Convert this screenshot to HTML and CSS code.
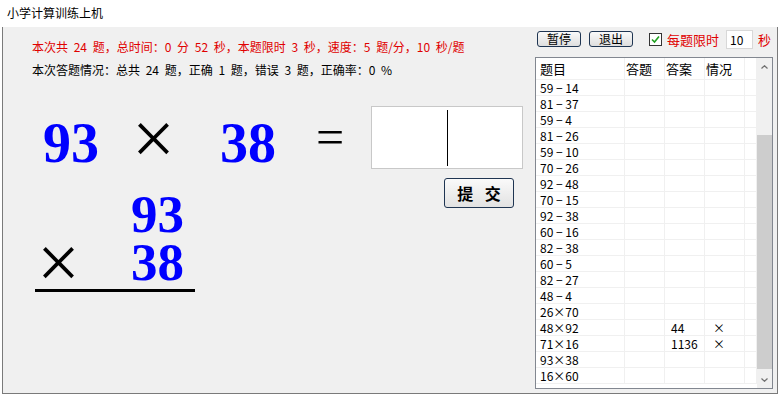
FILE: index.html
```html
<!doctype html>
<html lang="zh-CN">

<head>
	<meta charset="utf-8">
	<title>小学计算训练上机</title>
	<link rel="stylesheet" href="styles.css">
</head>

<body>
	<div class="window">
		<div class="titlebar">小学计算训练上机</div>
		<div class="client">
			<div class="main">
				<p class="status red">本次共 24 题，总时间：0 分 52 秒，本题限时 3 秒，速度：5 题/分，10 秒/题</p>
				<p class="status">本次答题情况：总共 24 题，正确 1 题，错误 3 题，正确率：0 %</p>

				<div class="equation">
					<span class="num">93</span>
					<span class="op">×</span>
					<span class="num">38</span>
					<span class="eq">=</span>
					<div class="answer"><span class="caret"></span></div>
				</div>

				<div class="lower">
					<div class="vertical">
						<div class="vrow"><span class="num">93</span></div>
						<div class="vrow"><span class="op">×</span><span class="num">38</span></div>
						<div class="rule"></div>
					</div>
					<button class="submit" type="button">提 交</button>
				</div>
			</div>

			<div class="side">
				<div class="toolbar">
					<button class="small-btn" type="button">暂停</button>
					<button class="small-btn" type="button">退出</button>
					<span class="check">
						<svg width="9" height="9" viewBox="0 0 9 9" aria-hidden="true"><polyline points="1,4.5 3.5,7 8,1.5" fill="none" stroke="#21a121" stroke-width="1.6"/></svg>
					</span>
					<span class="limit red">每题限时</span>
					<span class="seconds">10</span>
					<span class="unit red">秒</span>
				</div>

				<div class="list">
					<div class="grid" id="grid">
						<div class="row head">
							<span>题目</span><span>答题</span><span>答案</span><span>情况</span><span></span>
						</div>
					</div>
					<div class="scrollbar">
						<div class="arrow">
							<svg width="7" height="4" viewBox="0 0 7 4" aria-hidden="true"><polyline points="0.5,3.5 3.5,0.7 6.5,3.5" fill="none" stroke="#707070" stroke-width="1.2"/></svg>
						</div>
						<div class="track"><div class="thumb"></div></div>
						<div class="arrow">
							<svg width="7" height="4" viewBox="0 0 7 4" aria-hidden="true"><polyline points="0.5,0.5 3.5,3.3 6.5,0.5" fill="none" stroke="#707070" stroke-width="1.2"/></svg>
						</div>
					</div>
				</div>
			</div>
		</div>
	</div>

	<script>
		const rows = [
			["59 − 14"], ["81 − 37"], ["59 − 4"], ["81 − 26"], ["59 − 10"],
			["70 − 26"], ["92 − 48"], ["70 − 15"], ["92 − 38"], ["60 − 16"],
			["82 − 38"], ["60 − 5"], ["82 − 27"], ["48 − 4"], ["26×70"],
			["48×92", "", "44", "×"], ["71×16", "", "1136", "×"],
			["93×38"], ["16×60"]
		];

		for (const r of rows) {
			const row = document.createElement("div");
			row.className = "row";
			for (let i = 0; i < 5; i++) {
				const cell = document.createElement("span");
				cell.textContent = r[i] || "";
				row.appendChild(cell);
			}
			grid.appendChild(row);
		}
	</script>
</body></html>
```

FILE: styles.css
```css
body {
	margin: 0;
	background-color: #ffffff;
	font-family: "Noto Sans CJK SC", sans-serif;
	color: #000000;
	overflow: hidden;
}

.window {
	width: 776px;
	margin-left: 2px;
}

.titlebar {
	height: 27px;
	line-height: 26px;
	padding-left: 5px;
	font-size: 12px;
	background-color: #ffffff;
}

.client {
	display: flex;
	height: 366px;
	background-color: #f0f0f0;
	border: 1px solid #7a7a7a;
	border-top: 0;
}

.red {
	color: #e00000;
}

/* left part */
.main {
	width: 532px;
	flex-shrink: 0;
}

.status {
	margin: 0;
	padding-left: 29px;
	font-size: 12px;
	line-height: 16px;
	height: 16px;
	white-space: nowrap;
	word-spacing: 3px;
}

.status.red {
	margin-top: 12px;
	margin-bottom: 7px;
}

.num {
	font-family: "Liberation Serif", serif;
	font-weight: bold;
	font-size: 56px;
	line-height: 64px;
	color: #0000ff;
}

.op,
.eq {
	font-family: "Liberation Serif", serif;
	font-size: 76px;
	line-height: 64px;
	text-align: center;
	display: inline-block;
}

.equation {
	display: flex;
	align-items: flex-start;
	margin-top: 28px;
	padding-left: 40px;
	height: 63px;
}

.equation .num {
	margin-top: 5px;
}

.equation .op {
	width: 109px;
	margin-right: 12px;
}

.equation .eq {
	width: 48px;
	margin-left: 30px;
	font-size: 50px;
	margin-top: -1px;
}

.answer {
	width: 150px;
	height: 61px;
	margin-left: 17px;
	background-color: #ffffff;
	border: 1px solid #c8c8c8;
	position: relative;
}

.caret {
	position: absolute;
	left: 75px;
	top: 3px;
	width: 1px;
	height: 56px;
	background-color: #000000;
}

.lower {
	display: flex;
	align-items: flex-start;
	margin-top: 9px;
}

.vertical {
	width: 160px;
	margin-left: 32px;
	margin-top: 12px;
}

.vrow {
	display: flex;
	justify-content: flex-end;
	height: 48px;
	padding-right: 11px;
}

.vrow .num {
	font-size: 53px;
	line-height: 48px;
}

.vertical .op {
	line-height: 48px;
	margin-right: auto;
	margin-left: 2px;
}

.rule {
	height: 3px;
	margin-top: 3px;
	background-color: #000000;
}

.submit {
	width: 70px;
	height: 30px;
	margin-left: 249px;
	padding: 0;
	font-family: "Noto Sans CJK SC", sans-serif;
	font-weight: bold;
	font-size: 16px;
	word-spacing: 8px;
	border: 1px solid #1f3552;
	border-radius: 3px;
	background: linear-gradient(#fafafa, #e2e2e2);
	color: #000000;
}

/* right part */
.side {
	width: 238px;
	flex-shrink: 0;
	padding-top: 2px;
}

.toolbar {
	display: flex;
	align-items: center;
	height: 20px;
	font-size: 13px;
	margin-bottom: 8px;
}

.small-btn {
	width: 44px;
	height: 16px;
	margin-left: 2px;
	padding: 0;
	font-family: "Noto Sans CJK SC", sans-serif;
	font-size: 12px;
	line-height: 14px;
	border: 1px solid #1f3552;
	border-radius: 3px;
	background: linear-gradient(#fafafa, #dedede);
	color: #000000;
}

.small-btn + .small-btn {
	margin-left: 8px;
}

.check {
	width: 11px;
	height: 11px;
	margin-left: 16px;
	border: 1px solid #333333;
	background-color: #ffffff;
	display: flex;
	align-items: center;
	justify-content: center;
}

.limit {
	margin-left: 5px;
	white-space: nowrap;
}

.seconds {
	width: 22px;
	height: 17px;
	margin-left: 7px;
	padding-left: 3px;
	line-height: 17px;
	background-color: #ffffff;
	border: 1px solid #d8d8d8;
	font-size: 12px;
}

.unit {
	margin-left: 5px;
}

.list {
	display: flex;
	height: 330px;
	border: 1px solid #828790;
	background-color: #ffffff;
	overflow: hidden;
}

.grid {
	width: 221px;
	flex-shrink: 0;
}

.row {
	display: grid;
	grid-template-columns: 89px 40px 40px 40px 12px;
	height: 16px;
	font-size: 12px;
	line-height: 16px;
}

.row span {
	border-right: 1px solid #f0f0f0;
	border-bottom: 1px solid #f0f0f0;
	padding-left: 6px;
	white-space: nowrap;
	overflow: hidden;
}

.row span:first-child {
	padding-left: 4px;
}

.row span:nth-child(4) {
	padding-left: 8px;
}

.row.head {
	height: 22px;
	line-height: 22px;
	font-size: 13px;
}

.row.head span {
	padding-left: 1px;
}

.row.head span:first-child {
	padding-left: 4px;
}

.scrollbar {
	width: 15px;
	display: flex;
	flex-direction: column;
	background-color: #f0f0f0;
}

.arrow {
	height: 17px;
	display: flex;
	align-items: center;
	justify-content: center;
}

.track {
	flex: 1;
	display: flex;
	flex-direction: column;
	justify-content: flex-end;
}

.thumb {
	height: 234px;
	margin-bottom: 2px;
	background-color: #cdcdcd;
}
```
